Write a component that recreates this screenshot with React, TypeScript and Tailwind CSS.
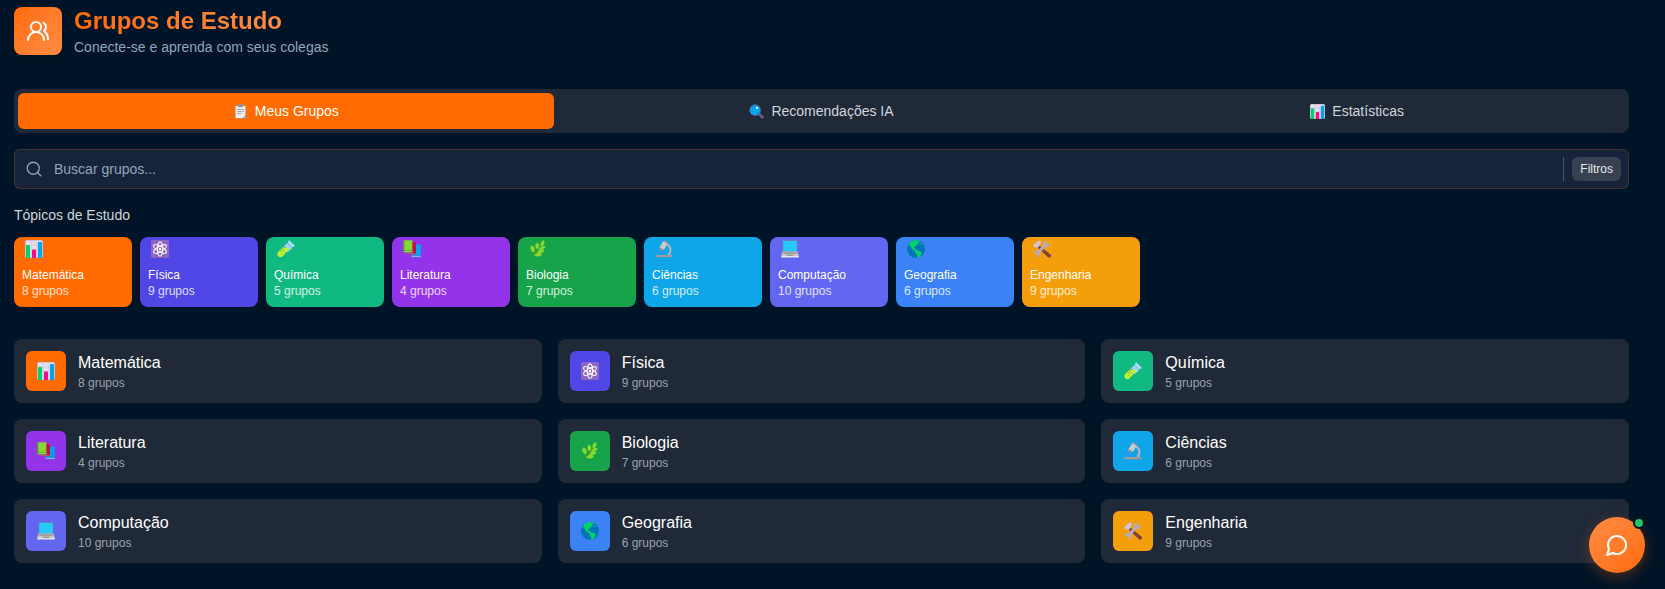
import { useState } from "react";
import { Search, UsersRound } from "lucide-react";
import type { ReactNode } from "react";

function Glyph({ size = "size-[18px]", children }: { size?: string; children: ReactNode }) {
  return (
    <svg viewBox="0 0 18 18" className={`${size} shrink-0`} aria-hidden="true">
      {children}
    </svg>
  );
}

const chart = (
  <>
    <rect x="0" y="0" width="18" height="18" rx="1.8" fill="#b4acbc" />
    <rect x=".6" y=".6" width="16.8" height="16.8" rx="1.2" fill="#e6dff0" />
    <path d="M6.2.6v17M11.8.6v17M.6 5h17M.6 9.4h17" stroke="#cdc4d6" strokeWidth=".7" />
    <path d="M1 18V6a1 1 0 0 1 1-1h2a1 1 0 0 1 1 1v12z" fill="#00d26a" />
    <path d="M7 18v-7.500a1 1 0 0 1 1-1h2a1 1 0 0 1 1 1V18z" fill="#f70a8d" />
    <path d="M13 18V3a1 1 0 0 1 1-1h2a1 1 0 0 1 1 1v15z" fill="#00a6ed" />
  </>
);
const atom = (
  <>
    <rect width="18" height="18" rx="1.800" fill="#8d65c5" />
    <g fill="none" stroke="#f4f4f4" strokeWidth="1.150">
      <ellipse cx="9" cy="9" rx="2.600" ry="7.200" />
      <ellipse cx="9" cy="9" rx="2.600" ry="7.200" transform="rotate(60 9 9)" />
      <ellipse cx="9" cy="9" rx="2.600" ry="7.200" transform="rotate(120 9 9)" />
    </g>
    <circle cx="9" cy="9" r="1.200" fill="#fff" />
  </>
);
const tube = (
  <>
    <path d="M10.300 2.900 15.300 7.900 10.500 12.200 6.200 7z" fill="#9fd2f5" />
    <path d="M5.500 7.600 13.200 8 5.600 16.200a3 3 0 0 1-4.300-4.300z" fill="#c3ef3c" />
    <path d="M11.600.7a.8.800 0 0 1 1.200 0l4.700 4.700a.8.800 0 0 1-.7 1.300l-2 .3-4-4z" fill="#aeddff" />
    <path d="m5.300 8.500 1.200 1.200M3.700 10.200l1.200 1.200M7.200 6.800l1.200 1.200" stroke="#44911b" strokeWidth="1" />
    <circle cx="7.300" cy="11" r=".8" fill="#86d72f" />
    <circle cx="4.600" cy="13.500" r=".8" fill="#86d72f" />
  </>
);
const books = (
  <>
    <path d="M9 4.600h8a.8.800 0 0 1 .8.800v10.600H9z" fill="#00a6ed" />
    <path d="M8.600 15.400h9.200v1.700H8.600z" fill="#b9c7f0" />
    <path d="M8.600 14.800h9.200v.6H8.600zM8.600 16.700h9.200v.6H8.600z" fill="#0074ba" />
    <path d="M4 2.300h8.200a.8.800 0 0 1 .8.800v11H4z" fill="#ca0b4a" />
    <path d="M3.600 12.900h9v1.300h-9z" fill="#c74c80" />
    <path d="M1.300.2h7.500a.5.500 0 0 1 .5.500v11.700H.3V1.200a1 1 0 0 1 1-1z" fill="#86d72f" />
    <path d="M.6 11h8.700v.9H.6z" fill="#d3d3d3" />
    <path d="M.3 1.200a1 1 0 0 1 1-1v10.400h8v.5H1.200v.6h8.100v.8h-8a1 1 0 0 1-1-1z" fill="#44911b" />
  </>
);
const herb = (
  <>
    <path d="M4.300 16.600C5.700 12 9 9 13.500 4.800M5.600 13.300 4.600 8M5.500 13.800c3-1.800 5-2 7.500-2.100M7.300 11 8.500 6.500" fill="none" stroke="#44911b" strokeWidth=".9" />
    <g fill="#86d72f">
      <path d="M14.900.2c1.300 2.500.1 5.400-2.700 6.400-1.700-2.500-.4-5.400 2.700-6.400z" />
      <path d="M8 2.600c2.700 1.700 2.900 4.700.6 6.900C5.900 8 5.600 4.900 8 2.600z" />
      <path d="M2.300 5.200c3.300 1.300 4.100 4.300 2.800 7.400C1.700 11.700.3 8.400 2.300 5.200z" />
      <path d="M16.600 6.200c-.7 3.100-3.600 4.500-6.700 3.500.7-3.100 3.600-4.500 6.700-3.500z" />
      <path d="M15.500 10.500c-1.400 2.900-4.700 3.600-7.400 1.900 1.500-2.900 4.600-3.700 7.400-1.900z" />
      <path d="M13 14.400c-2.200 2.600-5.500 2.700-7.900.6 2.100-2.700 5.400-2.800 7.900-.6z" />
    </g>
  </>
);
const microscope = (
  <>
    <path d="M11 4.500c5 .8 5.700 6.800 2.400 10.700" fill="none" stroke="#b4b4b8" strokeWidth="2.100" />
    <path d="m1.700 10 6.600 4.500" stroke="#3f87f5" strokeWidth="1.500" />
    <path d="m5 6.400 3.300-5.300 4.400 2.500-3.200 5.500A2.500 2.500 0 0 1 5 6.400z" fill="#c9c9cb" />
    <path d="m8.300 1.200 1.100-1.100 3.900 2.200-.5 1.500z" fill="#998ea4" />
    <path d="M5 7.600 9 10l-.7.900-3-1.900z" fill="#7d7385" />
    <rect x="0" y="14.900" width="18" height="2.400" rx="1" fill="#9b9b9b" />
  </>
);
const laptop = (
  <>
    <rect x="1.600" y=".2" width="14.800" height="11.500" rx=".9" fill="#7488a8" />
    <rect x="2.300" y=".9" width="13.400" height="10.300" rx=".4" fill="#26c9fc" />
    <path d="M1.700 11.500h14.600l1.600 4.600H.1z" fill="#c8c8c8" />
    <path d="M2.400 12.300h13.200l.6 1.700H1.800z" fill="#9b9b9b" />
    <path d="M6 14.700h6v1H6z" fill="#858585" />
    <rect x="0" y="16" width="18" height="1.600" rx=".6" fill="#e6e6e6" />
  </>
);
const globe = (
  <>
    <circle cx="9" cy="9" r="9" fill="#0074ba" />
    <path d="M3.100 2.300C5.700-.1 9.500-.3 12.400.8l.8 1.300-1.900.2.500 1.800-1.900.7-1 1.800-1.800.5.200 1.500 1.900.7 1 1.300 2.600.4 1.900 1.500-.7 2.500-1.600 1.700-.9 1.300h-1l-.5-3.300-1.900-1.800.5-2-2.300-.7-1.800-2-1.500-3-1.400.7z" fill="#00d26a" />
    <path d="M13.200 3.400 15 3.600l-.4 1.200-1.500-.3z" fill="#00d26a" />
  </>
);
const tools = (
  <>
    <path d="m5.500 4.800 11.700 9.700a1.500 1.500 0 0 1-2 2.700L4 7z" fill="#7d4533" />
    <path d="M0 5.600 5.500.5c1.400.2 2.100.7 2.800 1.900L6.800 4l.8.800-3.400 3.500-1.300-1.200-1.300.5z" fill="#cdc4d6" />
    <path d="M13.600.5c-2.800.3-4.200 2.400-3.500 4.800L4.700 11c-2.200-.6-3.800.9-4 3.300l2.100-.9 1.500 1.300-.6 2.600c2.800-.4 4.200-2.300 3.500-4.700l5.600-5.600c2.500.5 4.600-1 4.900-3.900l-2.400 1.600-1.700-1.600z" fill="#b4acbc" />
    <path d="m10.800 9.600 6.400 4.900a1.500 1.500 0 0 1-2 2.700L9.300 11z" fill="#7d4533" />
  </>
);
const clipboard = (
  <>
    <rect x="2" y="1" width="14" height="17" rx="1.200" fill="#d3883e" />
    <path d="M3.200 2.300h11.600v10.900l-3.600 3.500h-8z" fill="#f4f1f8" />
    <path d="M14.800 13.200v3.500h-3.600z" fill="#c4b6cf" />
    <path d="M6 1.500 7.500 0h3L12 1.500V4H6z" fill="#998ea4" />
    <path d="M4.900 6.600h8.200M4.900 9.200h8.200M4.900 11.800h5" stroke="#998ea4" strokeWidth="1.100" />
  </>
);
const magnifier = (
  <>
    <path d="m11.500 11.500 4.600 4.400" stroke="#635994" strokeWidth="3.400" strokeLinecap="round" />
    <circle cx="7.400" cy="7.400" r="7" fill="#635994" />
    <circle cx="7.400" cy="7.400" r="6" fill="#00a6ed" />
    <ellipse cx="9.700" cy="4.700" rx="1.500" ry="1.300" fill="#d9f3ff" />
  </>
);

const topics = [
  { name: "Matemática", count: 8, color: "bg-[#ff6b00]", art: chart },
  { name: "Física", count: 9, color: "bg-[#4f46e5]", art: atom },
  { name: "Química", count: 5, color: "bg-[#10b981]", art: tube },
  { name: "Literatura", count: 4, color: "bg-[#9333ea]", art: books },
  { name: "Biologia", count: 7, color: "bg-[#16a34a]", art: herb },
  { name: "Ciências", count: 6, color: "bg-[#0ea5e9]", art: microscope },
  { name: "Computação", count: 10, color: "bg-[#6366f1]", art: laptop },
  { name: "Geografia", count: 6, color: "bg-[#3b82f6]", art: globe },
  { name: "Engenharia", count: 9, color: "bg-[#f59e0b]", art: tools },
];

const tabs = [
  { label: "Meus Grupos", art: clipboard },
  { label: "Recomendações IA", art: magnifier },
  { label: "Estatísticas", art: chart },
];

export default function App() {
  const [active, setActive] = useState(0);
  return (
    <div className="min-h-screen bg-[#001427] pt-[5px] pr-9 pb-6 pl-3.5 font-['Liberation_Sans',Arial,sans-serif] text-white">
      <header className="flex items-center gap-3">
        <div className="flex size-12 items-center justify-center rounded-lg bg-linear-to-br from-[#ff6b00] to-[#ff8c42] shadow-lg">
          <UsersRound className="size-6" />
        </div>
        <div>
          <h1 className="w-fit bg-linear-to-r from-[#ff6b00] to-[#ff8c42] bg-clip-text text-2xl font-bold text-transparent">
            Grupos de Estudo
          </h1>
          <p className="text-sm text-[#94a3b8]">Conecte-se e aprenda com seus colegas</p>
        </div>
      </header>

      <nav className="mt-8 grid grid-cols-3 rounded-lg bg-[#1f2937] p-1" role="tablist">
        {tabs.map((tab, i) => (
          <button
            key={tab.label}
            type="button"
            role="tab"
            aria-selected={i === active}
            onClick={() => setActive(i)}
            className={`flex h-9 items-center justify-center gap-[7px] rounded-md text-sm ${
              i === active ? "bg-[#ff6b00] text-white" : "text-[#d1d5db]"
            }`}
          >
            <Glyph size="size-[15px]">{tab.art}</Glyph>
            {tab.label}
          </button>
        ))}
      </nav>

      <div className="mt-4 flex h-10 items-center rounded-md border border-[#ff6b00]/20 bg-[#16233b] pr-[7px] pl-2.5">
        <Search className="size-[18px] shrink-0 text-[#94a3b8]" strokeWidth={1.75} />
        <input
          type="search"
          aria-label="Buscar grupos"
          placeholder="Buscar grupos..."
          className="ml-[11px] h-full min-w-0 flex-1 bg-transparent text-sm outline-none placeholder:text-[#94a3b8]"
        />
        <div className="h-6 border-l border-[#475569]" />
        <button type="button" className="ml-2 h-6 rounded-md bg-[#374151] px-2 text-xs text-[#e5e7eb]">
          Filtros
        </button>
      </div>

      <h2 className="mt-4 text-sm text-[#d1d5db]">Tópicos de Estudo</h2>
      <div className="mt-3 flex flex-wrap gap-2">
        {topics.map((t) => (
          <button key={t.name} type="button" className={`w-[118px] rounded-lg px-2 pb-2 text-left text-xs ${t.color}`}>
            <span className="mb-1.5 flex size-6 items-center justify-center">
              <Glyph>{t.art}</Glyph>
            </span>
            <span className="block font-medium">{t.name}</span>
            <span className="block text-white/80">{t.count} grupos</span>
          </button>
        ))}
      </div>

      <main className="mt-8 grid grid-cols-3 gap-4">
        {topics.map((t) => (
          <article key={t.name} className="flex items-center gap-3 rounded-lg bg-[#1f2937] p-3">
            <div className={`flex size-10 items-center justify-center rounded-md ${t.color}`}>
              <Glyph>{t.art}</Glyph>
            </div>
            <div>
              <h3 className="text-base font-medium">{t.name}</h3>
              <p className="text-xs text-[#9ca3af]">{t.count} grupos</p>
            </div>
          </article>
        ))}
      </main>

      <button
        type="button"
        aria-label="Abrir chat"
        className="fixed right-5 bottom-4 flex size-14 items-center justify-center rounded-full bg-linear-to-tl from-[#ff6b00] to-[#ff8c42] shadow-[0_4px_14px_rgba(255,107,0,0.3)]"
      >
        <svg
          viewBox="0 0 24 24"
          className="size-6"
          fill="none"
          stroke="currentColor"
          strokeWidth="2"
          strokeLinecap="round"
          strokeLinejoin="round"
          aria-hidden="true"
        >
          <path d="M7.900 20A9 9 0 1 0 4 16.100L2 22Z" />
        </svg>
        <span className="absolute top-0 right-0 size-3 rounded-full border-2 border-[#001427] bg-[#22c55e]" />
      </button>
    </div>
  );
}
